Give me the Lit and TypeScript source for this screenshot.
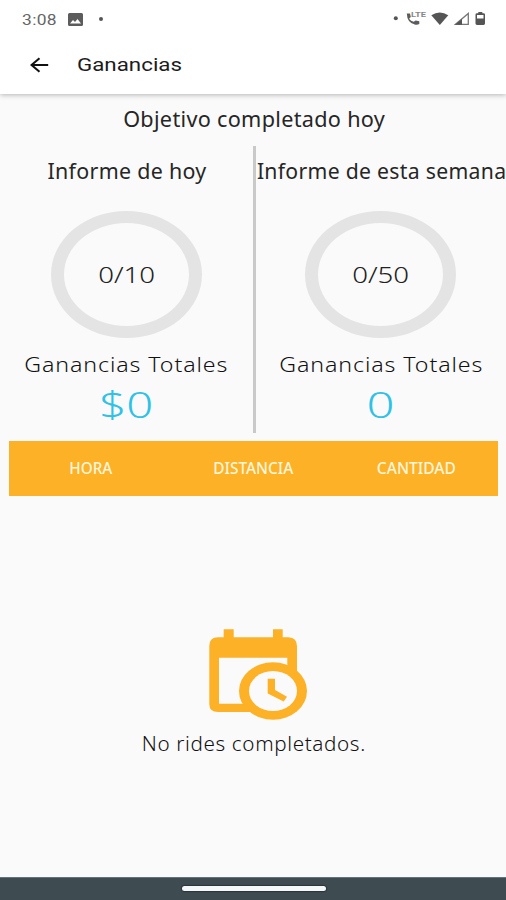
import { LitElement, html, css } from "lit";
import { customElement, property } from "lit/decorators.js";

/** One line of text, scaled horizontally to span a given width. */
@customElement("fit-text")
class FitText extends LitElement {
  @property() text = "";
  @property({ type: Number }) span = 0;

  static styles = css`
    :host { display: flex; justify-content: center; white-space: nowrap; min-width: 0; }
    .line { flex: none; display: inline-block; transform-origin: 50% 50%; }
    :host([start]) { justify-content: flex-start; }
    :host([start]) .line { transform-origin: 0 50%; }
  `;

  updated() {
    const line = this.renderRoot.querySelector(".line") as HTMLElement;
    const natural = line.getBoundingClientRect().width;
    if (this.span && natural) line.style.transform = `scaleX(${this.span / natural})`;
  }

  render() {
    return html`<span class="line">${this.text}</span>`;
  }
}

interface Report {
  title: string;
  titleSpan: number;
  progress: string;
  total: string;
  totalSpan: number;
}

@customElement("app-root")
class AppRoot extends LitElement {
  static styles = css`
    :host {
      display: flex; flex-direction: column; height: 900px; width: 506px; overflow: hidden;
      background: #fafafa; color: #262626;
      font-family: "Noto Sans", "Open Sans", sans-serif;
    }
    svg { display: block; flex: none; }
    .top { background: #fff; height: 94px; flex: none; box-shadow: 0 1px 5px rgba(0, 0, 0, 0.28); font-family: Roboto, sans-serif; }
    .status { height: 38px; display: flex; align-items: center; padding: 0 20px 0 22px; box-sizing: border-box; color: #666; }
    .clock { font-size: 14.5px; line-height: 34px; padding-top: 3px; width: 46px; letter-spacing: 0.3px; }
    .dot { width: 4px; height: 4px; border-radius: 50%; background: #555; margin-left: 16px; }
    .icons { margin-left: auto; }
    .bar { height: 54px; display: flex; align-items: center; padding-left: 30px; }
    .page { font-size: 18px; line-height: 54px; margin-left: 28px; color: #1c1c1c; }
    .goal { font-size: 21px; line-height: 50px; height: 52px; padding-left: 2px; flex: none; letter-spacing: 0.3px; }
    .reports { display: grid; grid-template-columns: 252.5px 3px 250.5px; height: 287px; flex: none; }
    .rule { background: #c9c9c9; }
    .report { display: flex; flex-direction: column; align-items: center; }
    .heading { font-size: 21px; line-height: 50px; height: 65px; padding-left: 2px; letter-spacing: 0.3px; }
    .ring {
      width: 151px; height: 127px; box-sizing: border-box; border: solid #e4e4e4; border-width: 12px 13px;
      border-radius: 50%; display: flex; align-items: center; justify-content: center;
      font-size: 21px; font-weight: 300; line-height: 28px; color: #222; flex: none;
    }
    .label { font-size: 20.5px; font-weight: 300; line-height: 52px; height: 52px; padding-left: 1px; color: #111; letter-spacing: 0.8px; }
    .total { font-size: 37px; font-weight: 300; line-height: 28px; color: #30c1e6; }
    .head {
      margin: 8px 8px 0 9px; height: 55px; flex: none; background: #fdb127; color: #fff6dc;
      display: grid; grid-template-columns: repeat(3, 1fr); font-size: 15.5px; line-height: 55px; font-weight: 500;
    }
    .empty { flex: 1; display: flex; flex-direction: column; align-items: center; padding-top: 133px; }
    .art { margin-left: 10px; }
    .note { font-size: 19.5px; font-weight: 300; line-height: 48px; color: #111; letter-spacing: 0.6px; padding-left: 2px; }
    .nav { height: 23px; flex: none; background: #3e4c51; border-top: 1px solid #66727a; box-sizing: border-box; display: flex; justify-content: center; padding: 8px 0 0 2px; }
    .pill { width: 144px; height: 5px; border-radius: 3px; background: #f4f8f9; box-shadow: 0 0 1px 1px #2b363b; }
  `;

  private reports: Report[] = [
    { title: "Informe de hoy", titleSpan: 159, progress: "0/10", total: "$0", totalSpan: 54 },
    { title: "Informe de esta semana", titleSpan: 249.5, progress: "0/50", total: "0", totalSpan: 28 },
  ];

  private columns = [
    { text: "HORA", span: 43 },
    { text: "DISTANCIA", span: 80 },
    { text: "CANTIDAD", span: 79 },
  ];

  private report(r: Report) {
    return html`<section class="report">
      <fit-text class="heading" .text=${r.title} .span=${r.titleSpan}></fit-text>
      <div class="ring"><fit-text .text=${r.progress} .span=${57}></fit-text></div>
      <fit-text class="label" .text=${"Ganancias Totales"} .span=${204}></fit-text>
      <fit-text class="total" .text=${r.total} .span=${r.totalSpan}></fit-text>
    </section>`;
  }

  render() {
    return html`
      <header class="top">
        <div class="status">
          <fit-text start class="clock" .text=${"3:08"} .span=${35}></fit-text>
          <svg width="15" height="13" viewBox="0 0 15 13">
            <path fill="#5c5c5c" fill-rule="evenodd" d="M1.500 0h12a1.500 1.500 0 0 1 1.500 1.500v10a1.500 1.500 0 0 1-1.500 1.500h-12A1.500 1.500 0 0 1 0 11.500v-10A1.500 1.500 0 0 1 1.500 0ZM2 10.500h11L9.500 6 7 9 5 7Z" />
          </svg>
          <span class="dot"></span>
          <svg class="icons" width="93" height="16" viewBox="393 11 93 16">
            <circle cx="395.800" cy="18.300" r="2" fill="#555" />
            <path fill="#5c5c5c" d="M406.800 13.500h3.200l.8 3.500-1.700 1.700q1.700 2.300 4.600 3.100l2-1.300 3.600.8v2.800q-2 .9-4.600.4-7.600-1.900-7.900-11Z" />
            <text x="411" y="17.300" font-size="7" font-weight="700" fill="#888" textLength="15" lengthAdjust="spacingAndGlyphs">LTE</text>
            <path fill="#555" d="M431.300 15.300q8.500-5.400 17 0l-8.500 9.700Z" />
            <path fill="none" stroke="#777" stroke-width="1.300" d="M455.500 24.300 468.300 13.500v10.800Z" />
            <path fill="#555" d="M455 24.700l7-6v6Z" />
            <path fill="#555" fill-rule="evenodd" d="M478.300 12h4v1.300h1.200q1.500 0 1.500 1.300v9q0 1.400-1.500 1.400h-6.500q-1.500 0-1.500-1.400v-9q0-1.300 1.500-1.300h1.300ZM477 15v3.500h6.500V15Z" />
          </svg>
        </div>
        <div class="bar">
          <svg width="19" height="16" viewBox="0 0 19 16">
            <path fill="none" stroke="#111" stroke-width="2.100" d="M18.200 8H1.500M9.500 1.300 1.500 8l8 6.700" />
          </svg>
          <fit-text start class="page" .text=${"Ganancias"} .span=${105}></fit-text>
        </div>
      </header>
      <fit-text class="goal" .text=${"Objetivo completado hoy"} .span=${262}></fit-text>
      <main class="reports">
        ${this.report(this.reports[0])}
        <div class="rule"></div>
        ${this.report(this.reports[1])}
      </main>
      <div class="head">
        ${this.columns.map((c) => html`<fit-text .text=${c.text} .span=${c.span}></fit-text>`)}
      </div>
      <div class="empty">
        <svg class="art" width="98" height="91" viewBox="0 0 98 91">
          <path fill="#fdb127" fill-rule="evenodd" d="M14.700.300h10v8h39.300v-8h9.700v8H79.500Q88 9 88 17v58q0 8-8.500 8H9Q.300 83 .300 75V17Q.300 8.300 9 8.300h5.700ZM10 28.700v46h68.300v-46Z" />
          <ellipse cx="64" cy="62" rx="34" ry="28.700" fill="#fdb127" />
          <ellipse cx="64" cy="62" rx="24" ry="20" fill="#fafafa" />
          <path fill="#fdb127" d="M58.700 49.700H66V61l12 6.700-3.300 4.800-16-8Z" />
        </svg>
        <fit-text class="note" .text=${"No rides completados."} .span=${224}></fit-text>
      </div>
      <footer class="nav"><div class="pill"></div></footer>
    `;
  }
}
